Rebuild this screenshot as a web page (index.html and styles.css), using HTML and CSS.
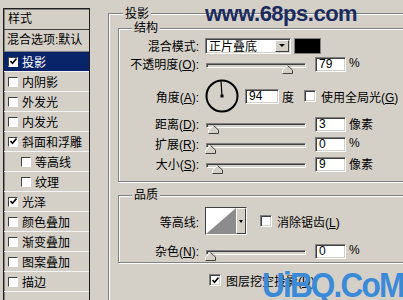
FILE: index.html
```html
<!DOCTYPE html>
<html lang="zh-CN">
<head>
  <meta charset="UTF-8">
  <title>图层样式 - 投影</title>
  <link rel="stylesheet" href="styles.css">
</head>
<body>
  <div class="dialog">

    <!-- Style list -->
    <div class="style-list">
      <div class="list-head">样式</div>
      <div class="list-blend">混合选项:默认</div>
      <div class="list-item selected">
        <span class="check"><svg width="7" height="7" viewBox="0 0 7 7"><path d="M0.5 3l2 2.2 4-4.7" fill="none" stroke="#000" stroke-width="1.6"/></svg></span>投影
      </div>
      <div class="list-item"><span class="check"></span>内阴影</div>
      <div class="list-item"><span class="check"></span>外发光</div>
      <div class="list-item"><span class="check"></span>内发光</div>
      <div class="list-item">
        <span class="check"><svg width="7" height="7" viewBox="0 0 7 7"><path d="M0.5 3l2 2.2 4-4.7" fill="none" stroke="#000" stroke-width="1.6"/></svg></span>斜面和浮雕
      </div>
      <div class="list-item sub"><span class="check"></span>等高线</div>
      <div class="list-item sub"><span class="check"></span>纹理</div>
      <div class="list-item">
        <span class="check"><svg width="7" height="7" viewBox="0 0 7 7"><path d="M0.5 3l2 2.2 4-4.7" fill="none" stroke="#000" stroke-width="1.6"/></svg></span>光泽
      </div>
      <div class="list-item"><span class="check"></span>颜色叠加</div>
      <div class="list-item"><span class="check"></span>渐变叠加</div>
      <div class="list-item"><span class="check"></span>图案叠加</div>
      <div class="list-item"><span class="check"></span>描边</div>
    </div>

    <!-- Drop shadow panel -->
    <div class="panel">
      <div class="group-title">投影</div>

      <div class="group structure">
        <div class="group-title">结构</div>

        <div class="row mode">
          <label>混合模式:</label>
          <div class="ctrl">
            <div class="select">正片叠底<span class="drop"></span></div>
            <div class="swatch"></div>
          </div>
        </div>

        <div class="row">
          <label>不透明度(<u>O</u>):</label>
          <div class="ctrl">
            <div class="track">
              <svg class="thumb" style="left: 75px" width="11" height="9" viewBox="0 0 11 9"><path d="M0.5 8.5V5L5.5 0.5 10.5 5V8.5Z" fill="#d4d0c8"/><path d="M0.5 8.5V5L5.5 0.5" fill="none" stroke="#fff"/><path d="M5.5 0.5L10.5 5V8.5H0.5" fill="none" stroke="#404040"/></svg>
            </div>
            <div class="field">79</div>
            <span class="unit">%</span>
          </div>
        </div>

        <div class="row angle">
          <label>角度(<u>A</u>):</label>
          <div class="ctrl">
            <svg class="dial" width="34" height="34" viewBox="0 0 34 34">
              <circle cx="17" cy="17" r="15.5" fill="none" stroke="#000" stroke-width="2"/>
              <path d="M17 17L16 2" stroke="#000" stroke-width="1.2"/>
              <rect x="15.5" y="15.5" width="3" height="3" fill="#000"/>
            </svg>
            <div class="field wide">94</div>
            <span class="unit">度</span>
            <span class="check big"></span>
            <span class="check-text">使用全局光(<u>G</u>)</span>
          </div>
        </div>

        <div class="row">
          <label>距离(<u>D</u>):</label>
          <div class="ctrl">
            <div class="track">
              <svg class="thumb" style="left: 1px" width="11" height="9" viewBox="0 0 11 9"><path d="M0.5 8.5V5L5.5 0.5 10.5 5V8.5Z" fill="#d4d0c8"/><path d="M0.5 8.5V5L5.5 0.5" fill="none" stroke="#fff"/><path d="M5.5 0.5L10.5 5V8.5H0.5" fill="none" stroke="#404040"/></svg>
            </div>
            <div class="field">3</div>
            <span class="unit">像素</span>
          </div>
        </div>

        <div class="row">
          <label>扩展(<u>R</u>):</label>
          <div class="ctrl">
            <div class="track">
              <svg class="thumb" style="left: -2px" width="11" height="9" viewBox="0 0 11 9"><path d="M0.5 8.5V5L5.5 0.5 10.5 5V8.5Z" fill="#d4d0c8"/><path d="M0.5 8.5V5L5.5 0.5" fill="none" stroke="#fff"/><path d="M5.5 0.5L10.5 5V8.5H0.5" fill="none" stroke="#404040"/></svg>
            </div>
            <div class="field">0</div>
            <span class="unit">%</span>
          </div>
        </div>

        <div class="row">
          <label>大小(<u>S</u>):</label>
          <div class="ctrl">
            <div class="track">
              <svg class="thumb" style="left: 5px" width="11" height="9" viewBox="0 0 11 9"><path d="M0.5 8.5V5L5.5 0.5 10.5 5V8.5Z" fill="#d4d0c8"/><path d="M0.5 8.5V5L5.5 0.5" fill="none" stroke="#fff"/><path d="M5.5 0.5L10.5 5V8.5H0.5" fill="none" stroke="#404040"/></svg>
            </div>
            <div class="field">9</div>
            <span class="unit">像素</span>
          </div>
        </div>
      </div>

      <div class="group quality">
        <div class="group-title">品质</div>

        <div class="row contour-row">
          <label>等高线:</label>
          <div class="ctrl">
            <div class="contour">
              <svg class="contour-preview" width="30" height="26" viewBox="0 0 30 26"><rect width="30" height="26" fill="#fff"/><path d="M0 26L30 0V26Z" fill="#8c8c8c"/></svg>
              <span class="contour-drop"></span>
            </div>
            <span class="check big spaced"></span>
            <span class="check-text">消除锯齿(<u>L</u>)</span>
          </div>
        </div>

        <div class="row noise">
          <label>杂色(<u>N</u>):</label>
          <div class="ctrl">
            <div class="track">
              <svg class="thumb" style="left: -2px" width="11" height="9" viewBox="0 0 11 9"><path d="M0.5 8.5V5L5.5 0.5 10.5 5V8.5Z" fill="#d4d0c8"/><path d="M0.5 8.5V5L5.5 0.5" fill="none" stroke="#fff"/><path d="M5.5 0.5L10.5 5V8.5H0.5" fill="none" stroke="#404040"/></svg>
            </div>
            <div class="field">0</div>
            <span class="unit">%</span>
          </div>
        </div>
      </div>

      <div class="knockout">
        <span class="check big"><svg width="7" height="7" viewBox="0 0 7 7"><path d="M0.5 3l2 2.2 4-4.7" fill="none" stroke="#000" stroke-width="1.6"/></svg></span>
        <span>图层挖空投影(<u>U</u>)</span>
      </div>
    </div>
  </div>

  <!-- watermarks -->
  <div class="wm-top">www.68ps.com</div>
  <div class="wm-bottom">UiBQ.CoM</div>
</body>
</html>
```

FILE: styles.css
```css
* {
  box-sizing: border-box;
}

body {
  margin: 0;
  width: 403px;
  height: 300px;
  overflow: hidden;
  position: relative;
  background: #d4d0c8;
  color: #000;
  font-family: "Liberation Sans", "Noto Sans CJK SC", sans-serif;
  font-size: 12px;
}

.dialog {
  display: flex;
  align-items: flex-start;
}

/* left list of styles */
.style-list {
  flex-shrink: 0;
  width: 87px;
  height: 310px;
  margin: 8px 0 0 3px;
  border: 1px solid #202020;
  box-shadow: inset 1px 1px 0 #808080;
}

.list-head {
  height: 21px;
  padding-left: 4px;
  line-height: 20px;
  border-bottom: 1px solid #404040;
}

.list-blend {
  height: 22px;
  padding-left: 3px;
  line-height: 21px;
  white-space: nowrap;
  border-bottom: 1px solid #808080;
}

.list-item {
  display: flex;
  align-items: center;
  gap: 4px;
  height: 20px;
  padding-left: 4px;
  border-bottom: 1px solid #f4f4f4;
  white-space: nowrap;
}

.list-item.sub {
  padding-left: 17px;
}

.list-item.selected {
  background: #0a246a;
  color: #fff;
}

.check {
  flex-shrink: 0;
  display: flex;
  align-items: center;
  justify-content: center;
  width: 10px;
  height: 10px;
  background: #fff;
  border: 1px solid;
  border-color: #404040 #fff #fff #404040;
}

.check.big {
  width: 12px;
  height: 12px;
  border-color: #808080 #fff #fff #808080;
  box-shadow: inset 1px 1px 0 #404040, inset -1px -1px 0 #d4d0c8;
}

/* right panel */
.panel {
  position: relative;
  flex-shrink: 0;
  width: 330px;
  height: 300px;
  margin: 13px 0 0 18px;
  padding: 14px 0 0 9px;
  border: 1px solid #808080;
  box-shadow: inset 1px 1px 0 #fff, 1px 1px 0 #fff;
}

.group {
  position: relative;
  width: 330px;
  border: 1px solid #808080;
  box-shadow: inset 1px 1px 0 #fff, 1px 1px 0 #fff;
}

.group-title {
  position: absolute;
  top: -8px;
  left: 14px;
  padding: 0 2px;
  line-height: 16px;
  background: #d4d0c8;
}

.group .group-title {
  top: -9px;
  left: 13px;
}

.structure {
  padding: 8px 0;
}

.quality {
  margin-top: 13px;
  padding: 11px 0 2px;
}

.row {
  display: grid;
  grid-template-columns: 80px auto;
  column-gap: 6px;
  align-items: center;
  height: 20px;
}

.row > label {
  text-align: right;
  white-space: nowrap;
}

.row.mode {
  height: 16px;
}

.row.angle {
  height: 34px;
  margin-top: 6px;
}

.ctrl {
  display: flex;
  align-items: center;
  white-space: nowrap;
}

.select {
  display: flex;
  align-items: center;
  justify-content: space-between;
  width: 86px;
  height: 16px;
  padding: 0 1px 0 3px;
  background: #fff;
  border: 1px solid;
  border-color: #808080 #fff #fff #808080;
  box-shadow: inset 1px 1px 0 #404040, inset -1px -1px 0 #d4d0c8;
}

.drop {
  display: flex;
  align-items: center;
  justify-content: center;
  width: 14px;
  height: 12px;
  background: #d4d0c8;
  border: 1px solid;
  border-color: #fff #404040 #404040 #fff;
}

.drop::after {
  content: "";
  border-left: 3px solid transparent;
  border-right: 3px solid transparent;
  border-top: 3px solid #000;
}

.swatch {
  width: 27px;
  height: 16px;
  margin-left: 3px;
  background: #000;
  border: 1px solid #808080;
}

.track {
  position: relative;
  width: 100px;
  height: 5px;
  margin: 4px 9px 0 1px;
  border: 1px solid;
  border-color: #808080 #fff #fff #808080;
  box-shadow: inset 1px 1px 0 #404040;
}

.thumb {
  position: absolute;
  top: 1px;
  display: block;
}

.field {
  width: 31px;
  height: 15px;
  margin-top: 2px;
  padding-left: 3px;
  line-height: 13px;
  background: #fff;
  border: 1px solid;
  border-color: #808080 #fff #fff #808080;
  box-shadow: inset 1px 1px 0 #404040, inset -1px -1px 0 #d4d0c8;
}

.field.wide {
  width: 34px;
  margin: 0 0 0 6px;
}

.unit {
  margin-left: 3px;
}

.angle .check {
  margin-left: 10px;
}

.check-text {
  margin-left: 5px;
}

.contour {
  display: flex;
  width: 42px;
  height: 28px;
  border: 1px solid;
  border-color: #404040 #fff #fff #404040;
}

.contour-preview {
  display: block;
}

.contour-drop {
  display: flex;
  align-items: center;
  justify-content: center;
  width: 10px;
  background: #d4d0c8;
  border: 1px solid;
  border-color: #fff #404040 #404040 #fff;
}

.contour-drop::after {
  content: "";
  border-left: 2px solid transparent;
  border-right: 2px solid transparent;
  border-top: 3px solid #000;
}

.check.spaced {
  margin-left: 13px;
}

.row.noise {
  margin-top: 5px;
}

.row.contour-row {
  height: 28px;
}

.knockout {
  display: flex;
  align-items: center;
  gap: 5px;
  height: 16px;
  margin-top: 9px;
  padding-left: 91px;
}

/* watermarks */
.wm-top {
  position: absolute;
  left: 205px;
  top: 1px;
  line-height: 26px;
  font-size: 22px;
  font-weight: bold;
  letter-spacing: -0.5px;
  color: #1b2b5e;
}

.wm-bottom {
  position: absolute;
  left: 262px;
  top: 268px;
  line-height: 34px;
  font-size: 35px;
  font-weight: bold;
  letter-spacing: -2px;
  color: #3a8ad8;
  transform: scaleX(0.9);
  transform-origin: left center;
}
```
